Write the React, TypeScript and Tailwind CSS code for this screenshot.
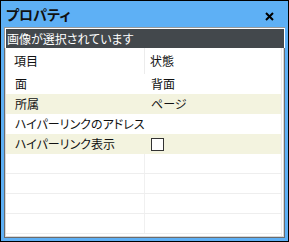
const rows = [
  { name: "面", value: "背面", shade: false },
  { name: "所属", value: "ページ", shade: true },
  { name: "ハイパーリンクのアドレス", value: "", shade: false },
  { name: "ハイパーリンク表示", value: "checkbox", shade: true },
];

function Row({ name, value, shade }: { name: string; value: string; shade: boolean }) {
  return (
    <div className={`flex h-[20px] items-center ${shade ? "bg-[#f3f3df]" : "bg-white"}`}>
      <div className="w-[139px] pl-[9px] text-[12px] leading-none">{name}</div>
      <div className="flex-1 pl-[6px] text-[12px] leading-none">
        {value === "checkbox" ? (
          <div className="h-[13px] w-[13px] border border-[#333] bg-white" />
        ) : (
          value
        )}
      </div>
    </div>
  );
}

export default function App() {
  return (
    <div
      className="flex h-[242px] w-[289px] flex-col border border-black bg-[#5eb0f5] text-[#111] [font-feature-settings:'palt']"
      style={{ fontFamily: '"Noto Sans CJK JP", "Noto Sans", sans-serif' }}
    >
      <div className="flex h-[26px] items-center justify-between pl-[5px] pr-[14px]">
        <span className="text-[14px] font-bold leading-none">プロパティ</span>
        <svg width="9" height="9" viewBox="0 0 9 9" className="mt-[4px]">
          <path d="M1 1 L8 8 M8 1 L1 8" stroke="#000" strokeWidth="2" />
        </svg>
      </div>
      <div className="mx-[3px] border-l border-t border-[#9a9a9a]">
        <div className="flex h-[20px] items-center border-l border-r border-t border-white bg-[#43484c] pl-[1px] text-[12px] leading-none text-white">
          画像が選択されています
        </div>
      </div>
      <div className="mx-[3px] mb-[3px] flex-1 border-b border-l border-r border-b-[#6b6b6b] border-l-[#6b6b6b] border-r-[#6b6b6b] bg-white">
        <div className="h-full border-b border-l border-r border-[#d8d8d8]">
          <div className="mr-[1px] h-full border-r border-[#ececec]">
            <div className="flex h-[26px] items-center">
              <div className="w-[139px] border-r border-[#ececec] pl-[8px] text-[12px] leading-[26px]">項目</div>
              <div className="flex-1 pl-[5px] text-[12px] leading-none">状態</div>
            </div>
            {rows.map((r) => (
              <Row key={r.name} {...r} />
            ))}
            {[0, 1, 2, 3].map((i) => (
              <div key={i} className="flex h-[20px] border-b border-[#eeeeee]">
                <div className="w-[139px] border-r border-[#f0f0f0]" />
              </div>
            ))}
          </div>
        </div>
      </div>
    </div>
  );
}
